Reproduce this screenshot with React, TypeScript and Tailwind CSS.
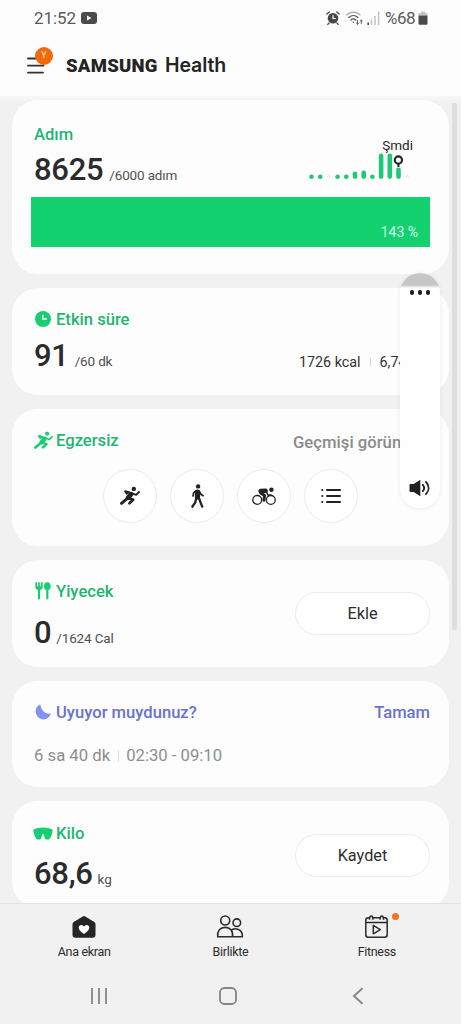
import type { ReactNode } from "react";

const Card = ({ className, children }: { className: string; children: ReactNode }) => (
  <section className={`w-full shrink-0 rounded-[26px] bg-[#fdfdfd] pl-[22px] pr-[19px] ${className}`}>{children}</section>
);

const Title = ({ icon, children }: { icon?: ReactNode; children: ReactNode }) => (
  <h2 className="flex h-5 items-center gap-1 whitespace-nowrap text-[16.6px] font-medium leading-5 text-[#1fb573]">
    {icon && <span className="flex w-[18px] justify-center">{icon}</span>}
    <span>{children}</span>
  </h2>
);

const Value = ({ value, unit, className }: { value: string; unit: string; className: string }) => (
  <p className={`flex h-8 items-baseline whitespace-nowrap leading-[34px] text-[#2b2b2b] ${className}`}>
    <span className="text-[31px] font-medium tracking-[-0.3px]">{value}</span>
    <span className="text-[13.5px] tracking-[-0.15px] text-[#505050]">{unit}</span>
  </p>
);

const PillButton = ({ children }: { children: ReactNode }) => (
  <button className="h-[43px] w-[135px] rounded-full border border-[#ececec] bg-white pt-0.5 text-[16.3px] text-[#2d2d2d]">
    {children}
  </button>
);

const RunIcon = ({ className }: { className: string }) => (
  <svg viewBox="0 0 20 19" className={className} fill="none" stroke="currentColor" strokeLinecap="round" strokeLinejoin="round">
    <circle cx="13.8" cy="2.4" r="2.2" fill="currentColor" stroke="none" />
    <path d="M11.2 7.6 8 11.2" strokeWidth="4.6" />
    <path d="M6.8 12.4 1.5 16.9" strokeWidth="2.8" />
    <path d="M8.8 11.8 13.2 13.3 9.4 16.8" strokeWidth="2.6" />
    <path d="M12 6.8 16.2 8.4 19 5.5" strokeWidth="1.8" />
    <path d="M5.3 4.9 9.6 6M5.3 4.9 6.8 7" strokeWidth="2.2" />
  </svg>
);

const WalkIcon = () => (
  <svg viewBox="0 0 13 24" className="h-6 w-[13px]" fill="none" stroke="currentColor" strokeLinecap="round" strokeLinejoin="round">
    <circle cx="7.1" cy="2.4" r="2.2" fill="currentColor" stroke="none" />
    <path d="M6.6 8.2 6.5 13" strokeWidth="5.2" />
    <path d="M5.4 13.5 4.3 18.4 1.4 22.7" strokeWidth="2.3" />
    <path d="M7.8 13.5 9.4 18 11.2 22.7" strokeWidth="2.3" />
    <path d="M5.3 6.8 2.7 8.6 2 12" strokeWidth="1.7" />
    <path d="M8 6.8 9.7 10 12 11.7" strokeWidth="1.7" />
  </svg>
);

const BikeIcon = () => (
  <svg viewBox="0 0 24 20" className="h-5 w-6" fill="none" stroke="currentColor" strokeLinecap="round" strokeLinejoin="round">
    <circle cx="5.2" cy="13.9" r="4.4" strokeWidth="1.3" />
    <circle cx="18.8" cy="13.9" r="4.4" strokeWidth="1.3" />
    <circle cx="19.4" cy="3.8" r="2.2" fill="currentColor" stroke="none" />
    <path d="M8.5 5 13.6 4.7" strokeWidth="4.4" />
    <path d="M8.8 7 12.6 9.6 11.9 14.3" strokeWidth="3" />
    <path d="M14.6 5.4 15.6 8.8 19 8.9" strokeWidth="1.5" />
  </svg>
);

const ListIcon = () => (
  <svg viewBox="0 0 20 16" className="h-4 w-5" stroke="currentColor" strokeWidth="2" strokeLinecap="round">
    <path d="M6 2h13M6 8h13M6 14h13M1.2 2h.1M1.2 8h.1M1.2 14h.1" />
  </svg>
);

const ClockIcon = () => (
  <svg viewBox="0 0 16 16" className="-mt-0.5 h-4 w-4" fill="none">
    <circle cx="8" cy="8" r="8" fill="#15cf70" />
    <path d="M7.8 3.8v4.3h4" stroke="#fff" strokeWidth="1.5" />
  </svg>
);

const FoodIcon = () => (
  <svg viewBox="0 0 16 18" className="-mt-0.5 h-[18px] w-4" fill="none" stroke="#15cf70" strokeLinecap="round">
    <path d="M1.2.9v4C1.2 6.7 2.3 7 4 7s2.8-.3 2.8-2.1v-4M4 .9v6" strokeWidth="1.7" />
    <path d="M2.6 5.5h2.8" strokeWidth="2.5" />
    <path d="M4 7v9.5M12.3 8v8.5" strokeWidth="2.2" />
    <ellipse cx="12.3" cy="4.2" rx="3.3" ry="4" fill="#15cf70" stroke="none" />
  </svg>
);

const MoonIcon = () => (
  <svg viewBox="0 0 16 16" className="-mt-0.5 h-4 w-4">
    <path d="M5.2.3C0 3-.8 9 3 13c4 4 11 3 12.8-3.4C10.5 10.6 6 6.5 5.2.3Z" fill="#8192f3" />
  </svg>
);

const ScaleIcon = () => (
  <svg viewBox="0 0 20 13" className="-mt-0.5 h-[13px] w-5 shrink-0">
    <path d="M.3 2.8C5.8-.4 14.2-.4 19.7 2.8c-.2 3.4-1.2 6.2-2.8 8.6-.5.8-1.2 1-2 1h-2.1q-.8 0-1-.8L10.6 7H9.4L8.2 11.6q-.2.8-1 .8H5.1c-.8 0-1.5-.2-2-1C1.5 9 .5 6.2.3 2.8Z" fill="#15cf70" />
  </svg>
);

const SpeakerIcon = () => (
  <svg viewBox="0 0 22 18" className="h-[18px] w-[22px]" fill="none" stroke="#202020" strokeLinecap="round">
    <path d="M1.7 5h3L11.3.8v16.4L4.7 13h-3q-1.2 0-1.2-1.2V6.2Q.5 5 1.7 5Z" fill="#202020" stroke="none" />
    <path d="M13.8 5.8c1.7 2 1.7 4.4 0 6.4M17 3c3.5 3.6 3.5 8.4 0 12" strokeWidth="1.8" />
  </svg>
);

// hourly step bars, null means nothing recorded
const hours = [4, 4, null, 4, 4, 7, 8, 4, 25, 25, 11, null];

const StepChart = () => (
  <svg viewBox="0 0 104 42" className="h-[42px] w-[104px]">
    {hours.map((h, i) =>
      h ? (
        <rect key={i} x={0.2 + i * 8.7} y={40.5 - h} width="4.6" height={h + 0.4} rx="2.3" fill="#1dc975" />
      ) : (
        <circle key={i} cx={2.4 + i * 8.7} cy="38.5" r="1.8" fill="#eeeeee" />
      )
    )}
    <path d="M89.4 25v4" stroke="#222" strokeWidth="2" />
    <circle cx="89.4" cy="22" r="3.6" fill="#fff" stroke="#222" strokeWidth="2.1" />
  </svg>
);

const StatusBar = () => (
  <div className="flex h-9 items-center justify-between pl-[34px] pr-[33px] pt-px text-[17px] text-[#5a5a5a]">
    <div className="flex items-center gap-[5px]">
      <span className="w-[42px] tracking-[-0.1px]">21:52</span>
      <svg viewBox="0 0 16 12" className="mb-0.5 h-3 w-4">
        <rect width="16" height="12" rx="3" fill="#4b4b4b" />
        <path d="M6 3.5v5L10.5 6Z" fill="#fff" />
      </svg>
    </div>
    <div className="flex items-center">
      <svg viewBox="0 0 14 14" className="mb-0.5 mr-1.5 h-[14px] w-[14px]" fill="none" stroke="#484848" strokeLinecap="round">
        <circle cx="7" cy="7.3" r="5.3" fill="#484848" stroke="none" />
        <path d="M.8 3 3.3.9M13.2 3 10.7.9M3 12l-1.2 1.4M11 12l1.2 1.4" strokeWidth="1.3" />
        <path d="M7 4.5v3h2.3" stroke="#fff" strokeWidth="1.2" />
      </svg>
      <svg viewBox="0 0 17 14" className="mb-0.5 mr-1 h-[14px] w-[17px]" fill="none" stroke="#555" strokeWidth="1.3" strokeLinecap="round">
        <path d="M.7 3.8C4.6.2 10.4.2 14 3.8" stroke="#a8a8a8" />
        <path d="M2.8 6.5c2.8-2.6 6.5-2.6 9 0M5 9c1.5-1.3 3.4-1.3 4.8 0" />
        <circle cx="7.4" cy="11.3" r=".8" fill="#555" stroke="none" />
        <path d="M11.5 9.5v3.7m-1.2-1.2 1.2 1.2 1.2-1.2M15.3 12.8V9m-1.2 1.2L15.3 9l1.2 1.2" strokeWidth=".9" />
      </svg>
      <svg viewBox="0 0 13 14" className="mb-0.5 h-[14px] w-[13px]" strokeWidth="1.6">
        <path d="M1.2 11.5V14" stroke="#444" />
        <path d="M4.5 8.5V14M8 5v9M11.6.5V14" stroke="#c5c5c5" />
      </svg>
      <span className="ml-[5px] w-8 text-[17px] tracking-[-0.5px]">%68</span>
      <svg viewBox="0 0 10 14" className="mb-0.5 ml-px h-[14px] w-[10px]">
        <path d="M.5 4.5V2.8Q.5 2 1.5 2H3V.5h4V2h1.5q1 0 1 .8v1.7Z" fill="#c5c5c5" />
        <path d="M.5 4.5h9v8q0 1.2-1.2 1.2H1.7Q.5 13.7.5 12.5Z" fill="#4b4b4b" />
      </svg>
    </div>
  </div>
);

const Header = () => (
  <header className="flex h-[60px] items-center pb-0.5 pl-[27px] text-[#242424]">
    <div className="relative h-[17px] w-[18px]">
      <svg viewBox="0 0 18 17" className="h-[17px] w-[18px]" stroke="#333" strokeWidth="1.9" strokeLinecap="round">
        <path d="M1 1.5h15M1 8.6h15.5M1 15.6h15" />
      </svg>
      <span className="absolute -top-[10px] left-[8px] flex size-[18px] items-center justify-center rounded-full bg-[#ef6a0b] text-[9px] text-[#ffe3cc]">
        Y
      </span>
    </div>
    <h1 className="ml-[21px] mt-px flex items-baseline whitespace-nowrap leading-6">
      <span className="w-[99px] text-[18.5px] font-black tracking-[0.25px]">SAMSUNG</span>
      <span className="font-['Inter'] text-[19.5px] font-semibold tracking-[-0.1px]">Health</span>
    </h1>
  </header>
);

const VolumePanel = () => (
  <div className="absolute left-[400px] top-[273px] flex h-[235px] w-10 flex-col items-center overflow-hidden rounded-[20px] bg-linear-to-b from-[#c6c6c6] from-[12px] to-[#fefefe] to-[15px] shadow-[0_1px_5px_rgba(0,0,0,0.07)]">
    <div className="mt-[17px] flex gap-[3.5px]">
      <i className="size-[4.5px] rounded-full bg-[#1c1c1c]" />
      <i className="size-[4.5px] rounded-full bg-[#1c1c1c]" />
      <i className="size-[4.5px] rounded-full bg-[#1c1c1c]" />
    </div>
    <div className="mb-[11px] mt-auto">
      <SpeakerIcon />
    </div>
  </div>
);

const HomeIcon = () => (
  <svg viewBox="0 0 24 22" className="h-[22px] w-6">
    <path d="M10.8.4q1.2-.7 2.4 0L22 5.7q1.5 1 1.5 2.5v10.5q0 3-3 3h-17q-3 0-3-3V8.2Q.5 6.7 2 5.7Z" fill="#252525" />
    <path d="M12 18c-3.5-2.3-5.3-4.2-5.3-6.2 0-3.1 3.6-3.8 5.3-1.2 1.7-2.6 5.3-1.9 5.3 1.2 0 2-1.8 3.9-5.3 6.2Z" fill="#fff" />
  </svg>
);

const TogetherIcon = () => (
  <svg viewBox="0 0 28 23" className="h-[23px] w-7" fill="none" stroke="#2b2b2b" strokeWidth="1.6" strokeLinejoin="round">
    <circle cx="9.2" cy="5.5" r="4.5" />
    <circle cx="20.8" cy="7.7" r="3.8" />
    <path d="M1.7 21.8c-.5-6 2.5-9.4 7.5-9.4s8 3.4 7.3 9.4ZM14.9 15.7c2.6-3.3 12-2.8 11.5 6.1h-9.9" />
  </svg>
);

const FitnessIcon = () => (
  <svg viewBox="0 0 23 23" className="h-[23px] w-[23px]" fill="none" stroke="#2b2b2b" strokeWidth="1.5" strokeLinejoin="round">
    <path d="M4.5 2.8H3.3Q.8 2.8.8 5.3v14.4q0 2.5 2.5 2.5h16.4q2.5 0 2.5-2.5V5.3q0-2.5-2.5-2.5h-1.2M8 2.8h7M4.5 4.7C4.5-.1 8-.1 8 4.7M15 4.7c0-4.8 3.5-4.8 3.5 0M1 7.5h21" />
    <path d="M8.3 10.4v8.4l7-4.2Z" />
  </svg>
);

const Tab = ({ icon, label }: { icon: ReactNode; label: string }) => (
  <div className="flex flex-1 flex-col items-center">
    <div className="flex h-[23px] items-center">{icon}</div>
    <span className="mt-1 whitespace-nowrap text-[12.5px] leading-5 tracking-[-0.3px] text-[#2c2c2c]">{label}</span>
  </div>
);

const circle = "flex size-[54px] items-center justify-center rounded-full border border-[#ebebeb] bg-white";

export default function App() {
  return (
    <div className="relative flex h-[1024px] w-[461px] flex-col overflow-hidden bg-[#fdfdfd] font-['Roboto',sans-serif]">
      <StatusBar />
      <Header />

      <main className="flex h-[807px] shrink-0 flex-col gap-[14px] overflow-hidden bg-[#f1f1f1] bg-linear-to-b from-[#f8f8f8] to-[#f1f1f1] to-[6px] pl-3 pr-3 pt-1">
        <Card className="h-[174px] pt-[25px]">
          <div className="flex justify-between">
            <div>
              <Title>Adım</Title>
              <Value value="8625" unit="/6000 adım" className="mt-2 gap-[6px]" />
            </div>
            <div className="mr-[17px] mt-[10px] flex w-[104px] flex-col">
              <span className="h-4 self-end text-[13.5px] leading-5 text-[#252525]">Şmdi</span>
              <div className="-mt-[13px]">
                <StepChart />
              </div>
            </div>
          </div>
          <div className="-ml-[3px] mt-3 flex h-[50px] w-[399px] items-end justify-end bg-[#12d16e] pb-1.5 pr-3 text-[14px] leading-[18px] text-[#d9f9e7]">
            143 %
          </div>
        </Card>

        <Card className="h-[107px] pt-[22px]">
          <Title icon={<ClockIcon />}>Etkin süre</Title>
          <div className="mt-[9px] flex justify-between">
            <Value value="91" unit="/60 dk" className="gap-[6px]" />
            <p className="mt-[13px] flex h-5 w-[131px] items-center whitespace-nowrap text-[14.3px] leading-5 text-[#333]">
              1726 kcal
              <span className="mx-[9px] h-2 w-px bg-[#d5d5d5]" />
              6,74 km
            </p>
          </div>
        </Card>

        <Card className="h-[137px] pt-[22px]">
          <div className="flex justify-between">
            <Title icon={<RunIcon className="-mt-0.5 size-[19px] shrink-0 text-[#15cf70]" />}>Egzersiz</Title>
            <span className="mt-0.5 w-[137px] whitespace-nowrap text-[16.7px] font-medium leading-5 text-[#8b8b8b]">
              Geçmişi görüntüle
            </span>
          </div>
          <div className="ml-[69px] mt-4 flex gap-[13px] text-[#222]">
            <div className={circle}><RunIcon className="size-5" /></div>
            <div className={circle}><WalkIcon /></div>
            <div className={circle}><BikeIcon /></div>
            <div className={circle}><ListIcon /></div>
          </div>
        </Card>

        <Card className="flex h-[107px] justify-between pt-[22px]">
          <div>
            <Title icon={<FoodIcon />}>Yiyecek</Title>
            <Value value="0" unit="/1624 Cal" className="mt-[14px] gap-[5px]" />
          </div>
          <div className="mt-[10px]">
            <PillButton>Ekle</PillButton>
          </div>
        </Card>

        <Card className="h-[106px] pt-[22px]">
          <div className="flex items-center justify-between text-[16.6px] font-medium leading-5 text-[#6873d0]">
            <h2 className="flex items-center gap-1 whitespace-nowrap">
              <span className="flex w-[18px] justify-center"><MoonIcon /></span>
              Uyuyor muydunuz?
            </h2>
            <span>Tamam</span>
          </div>
          <p className="mt-[23px] flex items-center whitespace-nowrap text-[16.7px] leading-5 text-[#8e8e8e]">
            6 sa 40 dk
            <span className="mx-[7.5px] h-3 w-px bg-[#dcdcdc]" />
            02:30 - 09:10
          </p>
        </Card>

        <Card className="flex h-[107px] justify-between pt-[23px]">
          <div>
            <Title icon={<ScaleIcon />}>Kilo</Title>
            <Value value="68,6" unit="kg" className="mt-[13px] gap-[5px]" />
          </div>
          <div className="mt-[10px]">
            <PillButton>Kaydet</PillButton>
          </div>
        </Card>
      </main>

      <nav className="flex h-[65px] shrink-0 border-t border-[#e2e2e2] bg-[#f1f1f1] pl-[11px] pr-[11px] pt-[11px]">
        <Tab icon={<HomeIcon />} label="Ana ekran" />
        <Tab icon={<TogetherIcon />} label="Birlikte" />
        <Tab
          icon={
            <div className="relative">
              <FitnessIcon />
              <i className="absolute -right-[11px] -top-[2px] size-[7px] rounded-full bg-[#ed761c]" />
            </div>
          }
          label="Fitness"
        />
      </nav>
      <div className="flex flex-1 items-center bg-[#f1f1f1] pl-[90px]">
        <svg viewBox="0 0 18 18" className="size-[18px]" stroke="#858585" strokeWidth="1.8">
          <path d="M2 1v16M9 1v16M16 1v16" />
        </svg>
        <svg viewBox="0 0 18 18" className="ml-[111px] size-[18px]" fill="none" stroke="#858585" strokeWidth="1.8">
          <rect x="1" y="1" width="16" height="16" rx="4.5" />
        </svg>
        <svg viewBox="0 0 12 18" className="ml-[115px] h-[18px] w-3" fill="none" stroke="#858585" strokeWidth="1.9">
          <path d="M10.5 1.2 2 9l8.5 7.8" />
        </svg>
      </div>

      <div className="absolute left-[452px] top-[103px] h-[527px] w-[5px] rounded-full bg-[#dedede]" />
      <VolumePanel />
    </div>
  );
}
